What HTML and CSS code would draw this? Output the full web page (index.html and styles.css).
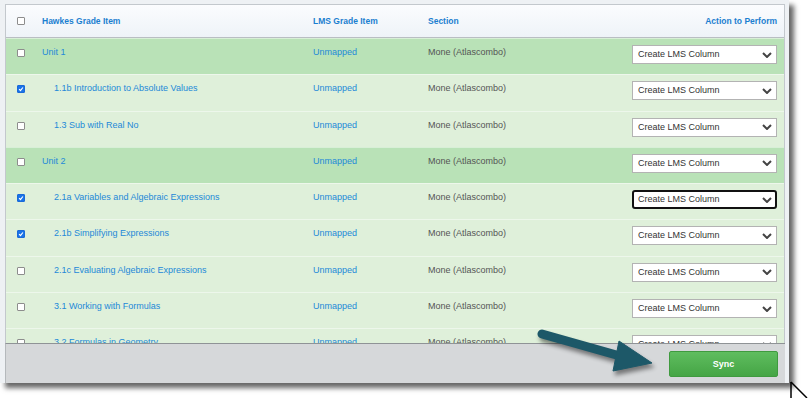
FILE: index.html
```html
<!DOCTYPE html>
<html>
<head>
<meta charset="utf-8">
<link rel="stylesheet" href="styles.css">
</head>
<body>
<div class="screen">
  <div class="panel">
    <div class="row head">
      <div class="c-check"><span class="cb"></span></div>
      <div class="c-name">Hawkes Grade Item</div>
      <div class="c-lms">LMS Grade Item</div>
      <div class="c-sec">Section</div>
      <div class="c-act">Action to Perform</div>
    </div>

    <div class="row unit">
      <div class="c-check"><span class="cb"></span></div>
      <div class="c-name link">Unit 1</div>
      <div class="c-lms link">Unmapped</div>
      <div class="c-sec">Mone (Atlascombo)</div>
      <div class="c-act"><div class="sel"><span>Create LMS Column</span><svg class="chev" viewBox="0 0 10 6"><polyline points="1,1 5,5 9,1"/></svg></div></div>
    </div>

    <div class="row item">
      <div class="c-check"><span class="cb on"><svg viewBox="0 0 8 8"><polyline points="1.5,4.2 3.3,6 6.5,2"/></svg></span></div>
      <div class="c-name link indent">1.1b Introduction to Absolute Values</div>
      <div class="c-lms link">Unmapped</div>
      <div class="c-sec">Mone (Atlascombo)</div>
      <div class="c-act"><div class="sel"><span>Create LMS Column</span><svg class="chev" viewBox="0 0 10 6"><polyline points="1,1 5,5 9,1"/></svg></div></div>
    </div>

    <div class="row item">
      <div class="c-check"><span class="cb"></span></div>
      <div class="c-name link indent">1.3 Sub with Real No</div>
      <div class="c-lms link">Unmapped</div>
      <div class="c-sec">Mone (Atlascombo)</div>
      <div class="c-act"><div class="sel"><span>Create LMS Column</span><svg class="chev" viewBox="0 0 10 6"><polyline points="1,1 5,5 9,1"/></svg></div></div>
    </div>

    <div class="row unit">
      <div class="c-check"><span class="cb"></span></div>
      <div class="c-name link">Unit 2</div>
      <div class="c-lms link">Unmapped</div>
      <div class="c-sec">Mone (Atlascombo)</div>
      <div class="c-act"><div class="sel"><span>Create LMS Column</span><svg class="chev" viewBox="0 0 10 6"><polyline points="1,1 5,5 9,1"/></svg></div></div>
    </div>

    <div class="row item">
      <div class="c-check"><span class="cb on"><svg viewBox="0 0 8 8"><polyline points="1.5,4.2 3.3,6 6.5,2"/></svg></span></div>
      <div class="c-name link indent">2.1a Variables and Algebraic Expressions</div>
      <div class="c-lms link">Unmapped</div>
      <div class="c-sec">Mone (Atlascombo)</div>
      <div class="c-act"><div class="sel focus"><span>Create LMS Column</span><svg class="chev" viewBox="0 0 10 6"><polyline points="1,1 5,5 9,1"/></svg></div></div>
    </div>

    <div class="row item">
      <div class="c-check"><span class="cb on"><svg viewBox="0 0 8 8"><polyline points="1.5,4.2 3.3,6 6.5,2"/></svg></span></div>
      <div class="c-name link indent">2.1b Simplifying Expressions</div>
      <div class="c-lms link">Unmapped</div>
      <div class="c-sec">Mone (Atlascombo)</div>
      <div class="c-act"><div class="sel"><span>Create LMS Column</span><svg class="chev" viewBox="0 0 10 6"><polyline points="1,1 5,5 9,1"/></svg></div></div>
    </div>

    <div class="row item">
      <div class="c-check"><span class="cb"></span></div>
      <div class="c-name link indent">2.1c Evaluating Algebraic Expressions</div>
      <div class="c-lms link">Unmapped</div>
      <div class="c-sec">Mone (Atlascombo)</div>
      <div class="c-act"><div class="sel"><span>Create LMS Column</span><svg class="chev" viewBox="0 0 10 6"><polyline points="1,1 5,5 9,1"/></svg></div></div>
    </div>

    <div class="row item">
      <div class="c-check"><span class="cb"></span></div>
      <div class="c-name link indent">3.1 Working with Formulas</div>
      <div class="c-lms link">Unmapped</div>
      <div class="c-sec">Mone (Atlascombo)</div>
      <div class="c-act"><div class="sel"><span>Create LMS Column</span><svg class="chev" viewBox="0 0 10 6"><polyline points="1,1 5,5 9,1"/></svg></div></div>
    </div>

    <div class="row item">
      <div class="c-check"><span class="cb"></span></div>
      <div class="c-name link indent">3.2 Formulas in Geometry</div>
      <div class="c-lms link">Unmapped</div>
      <div class="c-sec">Mone (Atlascombo)</div>
      <div class="c-act"><div class="sel"><span>Create LMS Column</span><svg class="chev" viewBox="0 0 10 6"><polyline points="1,1 5,5 9,1"/></svg></div></div>
    </div>
  </div>

  <div class="footer">
    <button class="sync">Sync</button>
  </div>

  <svg class="arrow" viewBox="0 0 140 60" width="140" height="60">
    <line x1="14" y1="14" x2="92" y2="36" />
    <polygon points="91,21 124,43 85,51" />
  </svg>
</div>

<svg class="cursor" viewBox="0 0 24 20" width="24" height="20">
  <polyline points="6,4 6,20" />
  <polyline points="6,4 22,20" />
</svg>
</body>
</html>
```

FILE: styles.css
```css
* { box-sizing: border-box; }

html, body {
  margin: 0;
  padding: 0;
  background: #ffffff;
}

body {
  width: 809px;
  height: 398px;
  overflow: hidden;
  position: relative;
  font-family: "Liberation Sans", Arial, sans-serif;
  font-size: 9px;
}

.screen {
  position: relative;
  width: 789px;
  height: 383px;
  background: #eef1f4;
  padding: 4px 4px 0 5px;
  display: flex;
  flex-direction: column;
  box-shadow: 5px 5px 5px rgba(0, 0, 0, 0.6);
}

.panel {
  flex: 1;
  border: 1px solid #c3c8cd;
  border-bottom: none;
  overflow: hidden;
  background: #dff0da;
}

.row {
  display: grid;
  grid-template-columns: 36px 271px 115px 1fr auto;
  align-items: start;
  padding: 6px 7px 0 0;
  height: 36.3px;
  line-height: 15px;
  border-top: 1px solid rgba(255, 255, 255, 0.45);
}

.row.head {
  height: 33px;
  padding-top: 0;
  align-items: center;
  border-top: none;
  border-bottom: 1px solid #b9bec3;
  background: linear-gradient(#fbfcfe, #eef3f8);
  color: #1c7fd0;
  font-weight: bold;
  font-size: 8.5px;
}

.row.unit { background: #b9e2b7; }
.row.item { background: #dff0da; }

.c-check {
  display: flex;
  align-items: center;
  height: 16px;
  padding-left: 11px;
}

.row.head .c-check { height: 32px; }

.cb {
  width: 8px;
  height: 8px;
  background: #fff;
  border: 1px solid #8d8d8d;
  border-radius: 1px;
  display: block;
}

.cb.on {
  background: #1a73e8;
  border-color: #1a6ad8;
}

.cb svg {
  display: block;
  width: 6px;
  height: 6px;
  fill: none;
  stroke: #fff;
  stroke-width: 1.6;
}

.link { color: #2389d8; }
.indent { padding-left: 12px; }
.c-sec { color: #555; }
.row.head .c-sec { color: #1c7fd0; }
.c-act { text-align: right; }

.sel {
  width: 145px;
  height: 19px;
  background: #fff;
  border: 1px solid #b3b3b3;
  display: flex;
  align-items: center;
  justify-content: space-between;
  padding: 0 4px 0 5px;
  color: #333;
  line-height: 17px;
  text-align: left;
}

.sel.focus {
  border: 2px solid #111;
  border-radius: 3px;
  padding-left: 4px;
  padding-right: 3px;
}

.chev {
  width: 10px;
  height: 6px;
  fill: none;
  stroke: #444;
  stroke-width: 2;
}

.footer {
  height: 40px;
  background: #d6d8da;
  border-top: 1px solid #8f9396;
  border-left: 1px solid #b5b9bc;
  display: flex;
  justify-content: flex-end;
  align-items: center;
  padding-right: 7px;
}

.sync {
  width: 109px;
  height: 26px;
  border: 1px solid #3f9a3f;
  border-radius: 2px;
  background: linear-gradient(#5fbd5f, #45a545);
  color: #fff;
  font-family: "Liberation Sans", Arial, sans-serif;
  font-weight: bold;
  font-size: 9px;
  margin-top: 1px;
}

.arrow {
  position: absolute;
  left: 528px;
  top: 320px;
  filter: drop-shadow(2px 4px 2px rgba(0, 0, 0, 0.45));
}

.arrow line {
  stroke: #1d5868;
  stroke-width: 9;
  stroke-linecap: round;
}

.arrow polygon {
  fill: #1d5868;
  stroke: #1d5868;
  stroke-width: 1;
  stroke-linejoin: round;
}

.cursor {
  position: absolute;
  left: 785px;
  top: 378px;
  fill: none;
  stroke: #000;
  stroke-width: 1.5;
}
```
